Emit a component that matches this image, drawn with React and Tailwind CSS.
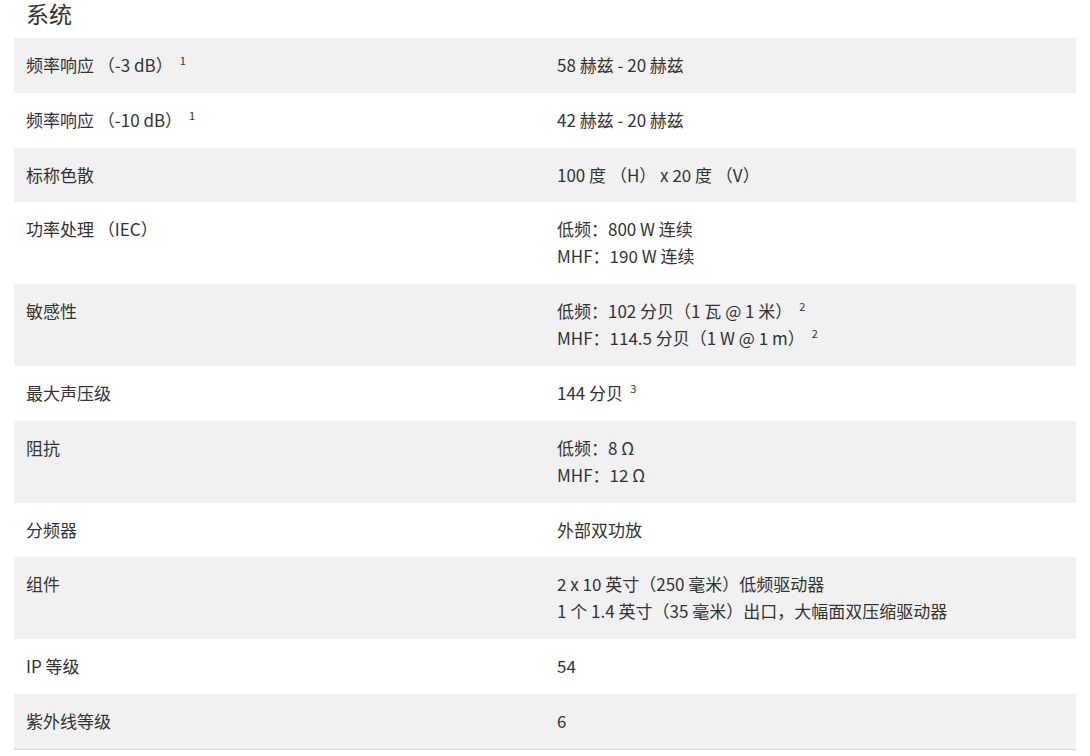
import React from "react";

const rows = [
  { label: ["频率响应 （-3 dB）", "1"], value: [["58 赫兹 - 20 赫兹"]] },
  { label: ["频率响应 （-10 dB）", "1"], value: [["42 赫兹 - 20 赫兹"]] },
  { label: ["标称色散"], value: [["100 度 （H） x 20 度 （V）"]] },
  { label: ["功率处理 （IEC）"], value: [["低频：800 W 连续"], ["MHF：190 W 连续"]] },
  { label: ["敏感性"], value: [["低频：102 分贝（1 瓦 @ 1 米）", "2"], ["MHF：114.5 分贝（1 W @ 1 m）", "2"]] },
  { label: ["最大声压级"], value: [["144 分贝", "3"]] },
  { label: ["阻抗"], value: [["低频：8 Ω"], ["MHF：12 Ω"]] },
  { label: ["分频器"], value: [["外部双功放"]] },
  { label: ["组件"], value: [["2 x 10 英寸（250 毫米）低频驱动器"], ["1 个 1.4 英寸（35 毫米）出口，大幅面双压缩驱动器"]] },
  { label: ["IP 等级"], value: [["54"]] },
  { label: ["紫外线等级"], value: [["6"]] },
];

// label/value text with an optional footnote marker
const Line = ({ parts }) => (
  <div className="h-[27px]">
    {parts[0]}
    {parts[1] && (
      <span className="ml-[7px] inline-block align-top text-[11px] leading-[19px]">{parts[1]}</span>
    )}
  </div>
);

const App = () => {
  return (
    <div
      className="w-[1090px] h-[756px] overflow-hidden bg-white text-[#333]"
      style={{ fontFamily: '"Noto Sans CJK SC", "Noto Sans", sans-serif' }}
    >
      <h2 className="px-[26px] pt-[1px] text-[23px] leading-[24px] h-[38px] font-normal">系统</h2>
      <table className="mx-[14px] w-[1062px] border-b border-[#d6d6d6] text-[17px] leading-[27px]">
        <tbody>
          {rows.map((row, i) => (
            <tr key={i} className={i % 2 === 0 ? "bg-[#f1f1f1]" : "bg-white"}>
              <td className="w-1/2 px-3 pt-[13px] pb-[14.8px] align-top">
                <Line parts={row.label} />
              </td>
              <td className="w-1/2 px-3 pt-[13px] pb-[14.8px] align-top">
                {row.value.map((v, j) => (
                  <Line key={j} parts={v} />
                ))}
              </td>
            </tr>
          ))}
        </tbody>
      </table>
    </div>
  );
};

export default App;
